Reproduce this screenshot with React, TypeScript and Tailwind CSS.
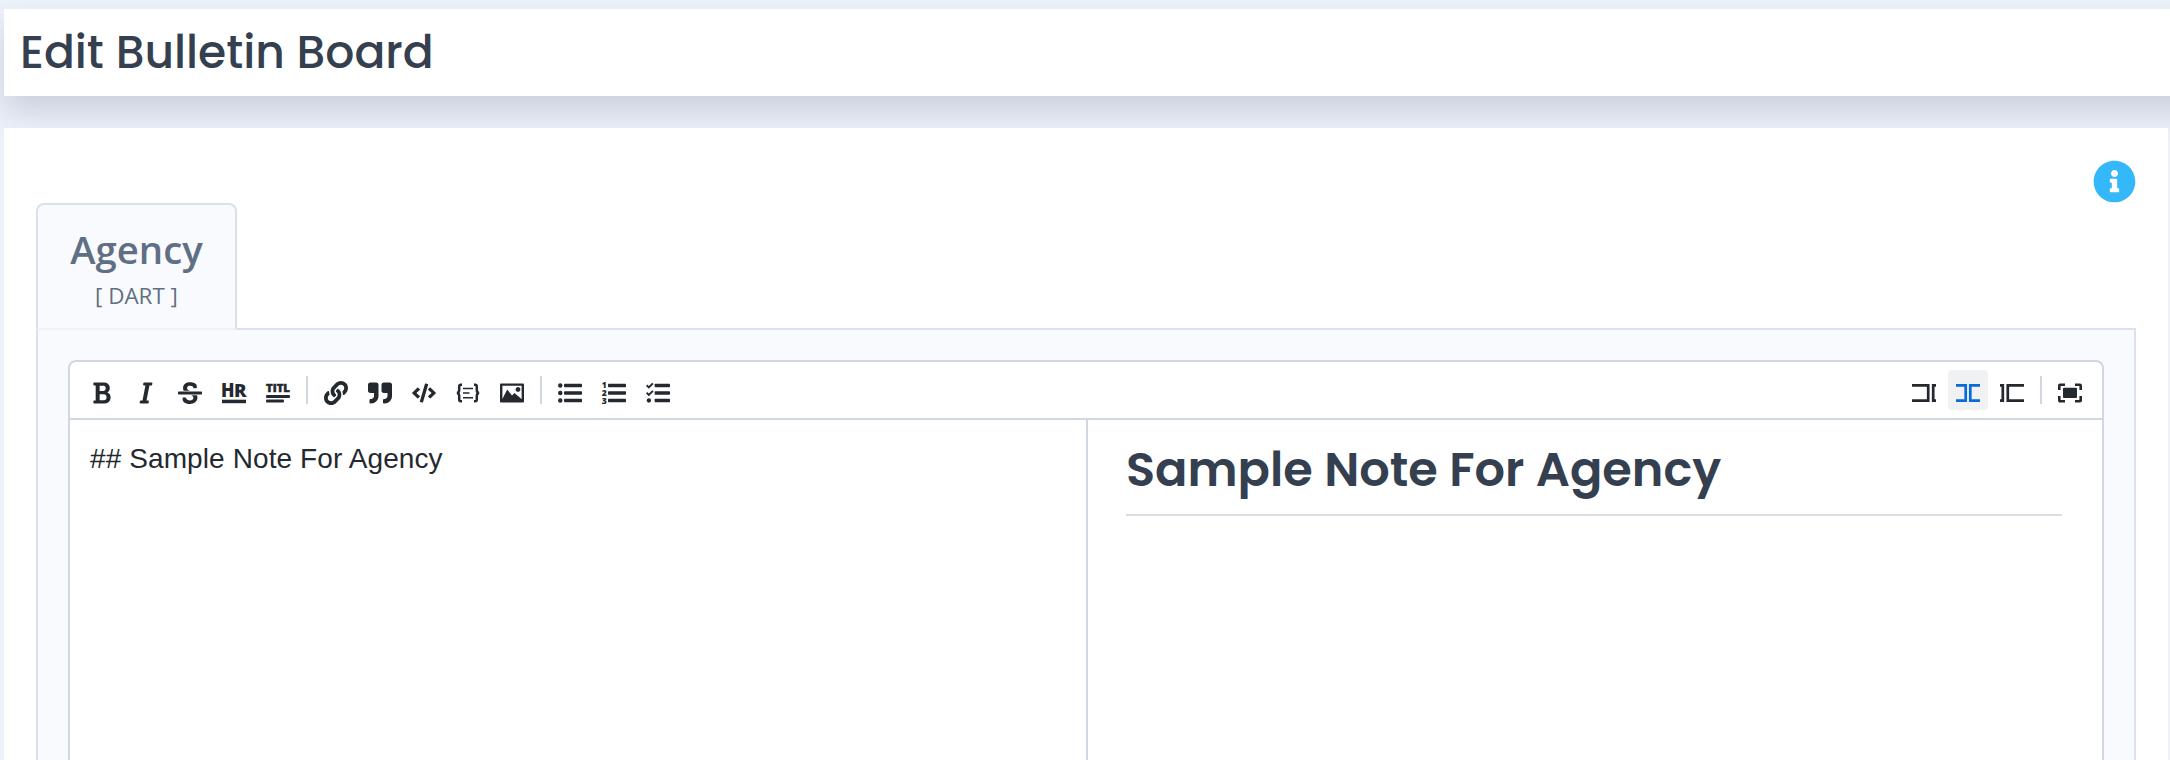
import type { ReactNode } from "react";
import { FaCode, FaInfoCircle, FaLink, FaQuoteRight } from "react-icons/fa";

function Tool({ label, active = false, children }: { label: string; active?: boolean; children: ReactNode }) {
  return (
    <button
      type="button"
      aria-label={label}
      className={`flex h-10 w-10 items-center justify-center rounded pt-1.5 ${
        active ? "bg-[#eff1f3] text-[#0b69da]" : "text-[#24292f]"
      }`}
    >
      {children}
    </button>
  );
}

function Divider() {
  return <span className="mx-1 mt-1.5 h-7 w-0.5 shrink-0 bg-[#d0d7e2]" />;
}

function BoldIcon() {
  return (
    <svg width="24" height="24" viewBox="0 0 384 512" fill="currentColor">
      <path d="M304.793 243.891c33.639-18.537 53.657-54.16 53.657-95.693 0-48.236-26.25-87.626-68.626-104.179C265.138 34.01 240.849 32 209.661 32H24c-8.837 0-16 7.163-16 16v33.049c0 8.837 7.163 16 16 16h33.113v318.53H24c-8.837 0-16 7.163-16 16V464c0 8.837 7.163 16 16 16h195.69c24.203 0 44.834-1.289 66.866-7.584C337.52 457.193 376 410.647 376 350.014c0-52.168-26.573-91.684-71.207-106.123zM142.217 100.809h67.444c16.294 0 27.536 2.019 37.525 6.717 15.828 8.479 24.906 26.502 24.906 49.446 0 35.029-20.32 56.79-53.029 56.79h-76.846V100.809zm112.642 305.475c-10.14 4.056-22.677 4.907-31.409 4.907h-81.233V281.943h84.367c39.645 0 63.057 25.38 63.057 63.057.001 28.425-13.66 52.483-34.782 61.284z" />
    </svg>
  );
}

function ItalicIcon() {
  return (
    <svg width="24" height="24" viewBox="0 0 320 512" fill="currentColor">
      <path d="M204.758 416h-33.849l62.092-320h40.725a16 16 0 0 0 15.704-12.937l6.242-32C297.599 41.184 290.034 32 279.968 32H120.235a16 16 0 0 0-15.704 12.937l-6.242 32C96.362 86.816 103.927 96 113.993 96h33.846l-62.09 320H46.278a16 16 0 0 0-15.704 12.935l-6.245 32C22.402 470.815 29.967 480 40.034 480h158.479a16 16 0 0 0 15.704-12.935l6.245-32c1.927-9.88-5.638-19.065-15.704-19.065z" />
    </svg>
  );
}

function StrikeIcon() {
  return (
    <svg width="24" height="24" viewBox="0 0 512 512" fill="currentColor">
      <path d="M496 288H16c-8.837 0-16-7.163-16-16v-32c0-8.837 7.163-16 16-16h480c8.837 0 16 7.163 16 16v32c0 8.837-7.163 16-16 16zm-214.666 16c27.258 12.937 46.524 28.683 46.524 56.243 0 33.108-28.977 53.676-75.621 53.676-32.325 0-76.874-12.08-76.874-44.271V368c0-8.837-7.164-16-16-16H113.75c-8.836 0-16 7.163-16 16v19.204c0 66.845 77.717 101.82 154.487 101.82 88.578 0 162.013-45.438 162.013-134.424 0-19.815-3.618-36.417-10.143-50.6H281.334zm-30.952-96c-32.422-13.505-56.836-28.946-56.836-59.683 0-33.92 30.901-47.406 64.962-47.406 42.647 0 64.962 16.593 64.962 32.985V136c0 8.837 7.164 16 16 16h45.613c8.836 0 16-7.163 16-16v-30.318c0-52.438-71.725-79.875-142.575-79.875-85.203 0-150.726 40.972-150.726 125.646 0 22.71 4.665 41.176 12.777 56.547h129.823z" />
    </svg>
  );
}

function RuleIcon() {
  return (
    <svg width="24" height="24" viewBox="0 0 24 24" fill="currentColor" className="overflow-visible font-['Open_Sans',sans-serif]">
      <text x="-1" y="15.7" fontSize="18.5" fontWeight="800" textLength="13.5" lengthAdjust="spacingAndGlyphs">H</text>
      <text x="12" y="15.7" fontSize="17" fontWeight="800" textLength="12.6" lengthAdjust="spacingAndGlyphs">R</text>
      <rect y="18.7" width="24" height="3.5" />
    </svg>
  );
}

function TitleIcon() {
  return (
    <svg width="24" height="24" viewBox="0 0 24 24" fill="currentColor" className="overflow-visible font-['Open_Sans',sans-serif]">
      <text x="0" y="11.2" fontSize="11.2" fontWeight="800" textLength="24" lengthAdjust="spacingAndGlyphs" stroke="currentColor" strokeWidth="0.5">TITL</text>
      <rect y="14" width="24" height="3" rx="1" />
      <rect y="18.6" width="18" height="2.8" rx="1" />
    </svg>
  );
}

function CodeBlockIcon() {
  return (
    <svg width="24" height="24" viewBox="0 0 24 24" fill="none" stroke="currentColor">
      <path d="M6 3.7H4.8Q3.2 3.7 3.2 5.5V9Q3.2 12 .8 12Q3.2 12 3.2 15V18.5Q3.2 20.3 4.8 20.3H6M18 3.7h1.2q1.6 0 1.6 1.8V9q0 3 2.4 3q-2.4 0-2.4 3v3.5q0 1.8-1.6 1.8H18" strokeWidth="2.5" />
      <path d="M7 7.5h10M7 12h6.5M7 16.7h10" strokeWidth="1.5" />
    </svg>
  );
}

function ImageIcon() {
  return (
    <svg width="24" height="24" viewBox="0 0 20 20" fill="currentColor">
      <path d="M15 9c1.1 0 2-.9 2-2s-.9-2-2-2-2 .9-2 2 .9 2 2 2zm4-7H1c-.55 0-1 .45-1 1v14c0 .55.45 1 1 1h18c.55 0 1-.45 1-1V3c0-.55-.45-1-1-1zm-1 13l-6-5-2 2-4-5-4 8V4h16v11z" />
    </svg>
  );
}

function ListBars() {
  return (
    <>
      <rect x="128" y="60" width="384" height="72" rx="16" />
      <rect x="128" y="220" width="384" height="72" rx="16" />
      <rect x="128" y="380" width="384" height="72" rx="16" />
    </>
  );
}

function BulletListIcon() {
  return (
    <svg width="24" height="24" viewBox="0 0 512 512" fill="currentColor">
      <circle cx="48" cy="96" r="48" />
      <circle cx="48" cy="256" r="48" />
      <circle cx="48" cy="416" r="48" />
      <ListBars />
    </svg>
  );
}

function NumberListIcon() {
  return (
    <svg width="24" height="24" viewBox="0 0 512 512" fill="currentColor" className="overflow-visible font-['Open_Sans',sans-serif]">
      <g fontSize="176" fontWeight="800">
        <text x="-8" y="156" textLength="104" lengthAdjust="spacingAndGlyphs">1</text>
        <text x="-8" y="318" textLength="108" lengthAdjust="spacingAndGlyphs">2</text>
        <text x="-8" y="480" textLength="108" lengthAdjust="spacingAndGlyphs">3</text>
      </g>
      <ListBars />
    </svg>
  );
}

function CheckListIcon() {
  return (
    <svg width="24" height="24" viewBox="0 0 512 512" fill="currentColor">
      <path d="M14 92l46 44L148 50M14 252l46 44L148 210" fill="none" stroke="currentColor" strokeWidth="42" />
      <circle cx="62" cy="416" r="46" />
      <rect x="184" y="60" width="328" height="72" rx="16" />
      <rect x="184" y="220" width="328" height="72" rx="16" />
      <rect x="184" y="380" width="328" height="72" rx="16" />
    </svg>
  );
}

function EditIcon() {
  return (
    <svg width="24" height="24" viewBox="0 0 24 24" fill="none" stroke="currentColor" strokeWidth="2.7">
      <path d="M0 4.4h16.2V19.6H0M24 4.4h-2.8V19.6H24" />
    </svg>
  );
}

function LiveIcon() {
  return (
    <svg width="24" height="24" viewBox="0 0 24 24" fill="none" stroke="currentColor" strokeWidth="2.7">
      <path d="M0 4.4h9.7V19.6H0M24 4.4h-9.7V19.6H24" />
    </svg>
  );
}

function PreviewIcon() {
  return (
    <svg width="24" height="24" viewBox="0 0 24 24" fill="none" stroke="currentColor" strokeWidth="2.7">
      <path d="M24 4.4H7.8V19.6H24M0 4.4h2.8V19.6H0" />
    </svg>
  );
}

function FullscreenIcon() {
  return (
    <svg width="24" height="24" viewBox="0 0 24 24" fill="none" stroke="currentColor" strokeWidth="2.6">
      <path d="M1.3 9V4.5q0-.8.8-.8H7M17 3.7h4.9q.8 0 .8.8V9M22.7 15v4.5q0 .8-.8.8H17M7 20.3H2.1q-.8 0-.8-.8V15" />
      <rect x="5" y="6.8" width="14" height="10.2" rx="1" fill="currentColor" stroke="none" />
    </svg>
  );
}

function Toolbar() {
  return (
    <div className="flex h-[58px] shrink-0 justify-between border-b-2 border-[#d0d7e0] px-3 pt-2">
      <div className="flex gap-1">
        <Tool label="Bold"><BoldIcon /></Tool>
        <Tool label="Italic"><ItalicIcon /></Tool>
        <Tool label="Strikethrough"><StrikeIcon /></Tool>
        <Tool label="Horizontal rule"><RuleIcon /></Tool>
        <Tool label="Title"><TitleIcon /></Tool>
        <Divider />
        <Tool label="Link"><FaLink size={24} /></Tool>
        <Tool label="Quote"><FaQuoteRight size={24} /></Tool>
        <Tool label="Code"><FaCode size={24} /></Tool>
        <Tool label="Code block"><CodeBlockIcon /></Tool>
        <Tool label="Image"><ImageIcon /></Tool>
        <Divider />
        <Tool label="Bulleted list"><BulletListIcon /></Tool>
        <Tool label="Numbered list"><NumberListIcon /></Tool>
        <Tool label="Checked list"><CheckListIcon /></Tool>
      </div>
      <div className="flex gap-1">
        <Tool label="Edit"><EditIcon /></Tool>
        <Tool label="Live" active><LiveIcon /></Tool>
        <Tool label="Preview"><PreviewIcon /></Tool>
        <Divider />
        <Tool label="Full screen"><FullscreenIcon /></Tool>
      </div>
    </div>
  );
}

export default function App() {
  return (
    <div className="flex h-[760px] w-[2170px] flex-col overflow-hidden bg-[#ecf1fa] pt-[9px] pl-1 font-['Open_Sans',sans-serif]">
      <header className="-mr-12 h-[87px] shrink-0 bg-white pl-4 shadow-[0_16px_32px_rgba(10,10,40,0.14)]">
        <h1 className="font-['Poppins','Inter',sans-serif] text-[45.6px] leading-[87px] font-medium whitespace-nowrap text-[#34404f]">
          Edit Bulletin Board
        </h1>
      </header>

      <main className="relative mt-8 mr-0.5 flex grow flex-col bg-white px-8 pt-8">
        <div className="flex h-[43px] shrink-0 justify-end">
          <FaInfoCircle size={43} className="text-[#35b8fa]" />
        </div>

        <div className="z-10 -mb-0.5 flex h-[127px] w-[201px] shrink-0 flex-col items-center rounded-t-lg border-2 border-[#d9e1ef] border-b-[#edf2f9] bg-[#f9fafe] text-[#5f6f84]">
          <span className="mt-[18px] text-[38.3px] leading-[53px] font-semibold">Agency</span>
          <span className="mt-[5px] text-[22.4px] leading-[30px]">[ DART ]</span>
        </div>

        <section className="flex grow flex-col border-x-2 border-t-2 border-[#d9e1ef] bg-[#f9fafe] px-[30px] pt-[30px]">
          <div className="flex grow flex-col rounded-t-lg border-x-2 border-t-2 border-[#d0d7e0] bg-white">
            <Toolbar />
            <div className="flex grow">
              <div className="w-[1016px] shrink-0 px-5 pt-[21px] font-['Liberation_Sans',sans-serif] text-[28px] leading-9 tracking-[0.1px] text-[#24292f]">
                ## Sample Note For Agency
              </div>
              <div className="grow border-l-2 border-[#d0d7e0] pt-5 pr-10 pl-[38px]">
                <h2 className="h-[76px] border-b-2 border-[#d8dee4] font-['Poppins','Inter',sans-serif] text-[47.8px] leading-[60px] font-semibold whitespace-nowrap text-[#34404f]">
                  Sample Note For Agency
                </h2>
              </div>
            </div>
          </div>
        </section>
      </main>
    </div>
  );
}
